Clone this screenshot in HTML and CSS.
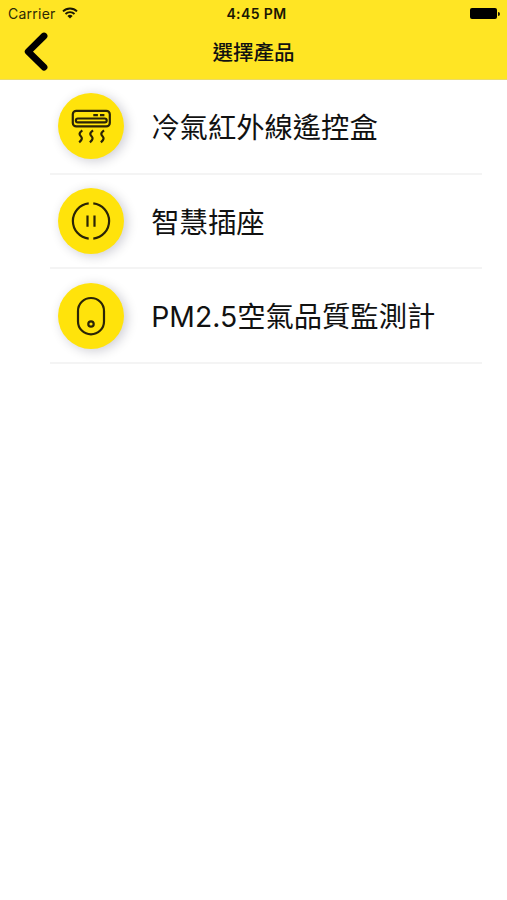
FILE: index.html
```html
<!DOCTYPE html>
<html lang="zh-Hant">

<head>
    <meta charset="UTF-8">
    <meta name="viewport" content="width=device-width, initial-scale=1.0">
    <title>選擇產品</title>
    <link rel="stylesheet" href="styles.css">
</head>

<body>
    <header class="header">
        <div class="status-bar">
            <div class="carrier">
                <span>Carrier</span>
                <svg class="wifi" viewBox="0 0 16 12">
                    <path d="M1 4.400a10 10 0 0 1 14 0M3.500 7a6.400 6.400 0 0 1 9 0" />
                    <path class="solid" d="M5.400 9a3.800 3.800 0 0 1 5.200 0L8 11.600z" />
                </svg>
            </div>
            <div class="time">4:45 PM</div>
            <div class="battery">
                <span class="battery-body"></span>
                <span class="battery-tip"></span>
            </div>
        </div>
        <nav class="nav-bar">
            <a class="back" href="#" aria-label="返回">
                <svg viewBox="0 0 24 40">
                    <path d="M20 4L4.200 19.600L20 35.200" />
                </svg>
            </a>
            <h1 class="title">選擇產品</h1>
        </nav>
    </header>

    <ul class="product-list">
        <li class="product">
            <div class="icon">
                <svg viewBox="0 0 66 66">
                    <rect x="14.800" y="17.800" width="37" height="15.600" rx="3.500" />
                    <rect x="17.900" y="25.500" width="30.800" height="3.900" rx="1.950" />
                    <path d="M35.300 22.200h4.600M42 22.200h4.400" />
                    <path d="M24.300 37.400c-3.800 3-3 4.300-1.500 5.800s1.800 3.200-1.600 6.200M35 37.400c-3.800 3-3 4.300-1.500 5.800s1.800 3.200-1.600 6.200M46 37.400c-3.800 3-3 4.300-1.500 5.800s1.800 3.200-1.600 6.200" />
                </svg>
            </div>
            <span class="name">冷氣紅外線遙控盒</span>
        </li>
        <li class="product">
            <div class="icon">
                <svg viewBox="0 0 66 66">
                    <path d="M30.700 15.400a17.700 17.700 0 0 0 0 35.200M35.300 15.400a17.700 17.700 0 0 1 0 35.200" />
                    <path d="M29.500 27.400v11.400M36.500 27.400v11.400" />
                </svg>
            </div>
            <span class="name">智慧插座</span>
        </li>
        <li class="product">
            <div class="icon">
                <svg viewBox="0 0 66 66">
                    <rect x="20" y="15" width="26" height="36.400" rx="13" />
                    <circle cx="33" cy="41" r="2.700" />
                </svg>
            </div>
            <span class="name">PM2.5空氣品質監測計</span>
        </li>
    </ul>
</body>

</html>
```

FILE: styles.css
```css
* {
    margin: 0;
    padding: 0;
    box-sizing: border-box;
}

body {
    background: #fff;
    color: #111;
    font-family: Inter, "Noto Sans CJK TC", sans-serif;
}

.header {
    height: 80px;
    background: #ffe524;
    border-bottom: 1px solid #ebdb68;
}

.status-bar {
    height: 27px;
    padding: 0 7px 0 8px;
    display: grid;
    grid-template-columns: 1fr auto 1fr;
    align-items: center;
    font-size: 14px;
}

.carrier {
    display: flex;
    align-items: center;
    gap: 6px;
    color: #2d2905;
    letter-spacing: 0.25px;
}

.wifi {
    width: 16px;
    height: 12px;
    margin-top: -2px;
    fill: none;
    stroke: #1a1703;
    stroke-width: 1.9;
}

.wifi .solid {
    fill: #1a1703;
    stroke: none;
}

.time {
    padding-left: 5px;
    font-weight: 600;
    color: #1a1703;
    letter-spacing: 0.4px;
}

.battery {
    display: flex;
    align-items: center;
    justify-content: flex-end;
    gap: 1px;
}

.battery-body {
    width: 27px;
    height: 11px;
    background: #000;
    border-radius: 2px;
}

.battery-tip {
    width: 2px;
    height: 4px;
    background: #1a1703;
    border-radius: 0 2px 2px 0;
}

.nav-bar {
    height: 52px;
    padding: 0 24px;
    display: grid;
    grid-template-columns: 1fr auto 1fr;
    align-items: center;
}

.back {
    height: 42px;
}

.back svg {
    width: 24px;
    height: 40px;
    fill: none;
    stroke: #000;
    stroke-width: 6.8;
    stroke-linecap: round;
    stroke-linejoin: round;
}

.title {
    font-size: 20.5px;
    line-height: 30px;
    font-weight: 500;
}

.product-list {
    margin: 0 25px 0 50px;
    list-style: none;
}

.product {
    height: 94.7px;
    padding-left: 8px;
    display: flex;
    align-items: center;
    gap: 27.3px;
    border-bottom: 2px solid #f4f4f4;
}

.icon {
    width: 66px;
    height: 66px;
    border-radius: 50%;
    background: #ffe30b;
    box-shadow: 3px 2px 12px rgba(0, 0, 40, 0.2);
}

.icon svg {
    display: block;
    width: 66px;
    height: 66px;
    fill: none;
    stroke: #2a2406;
    stroke-width: 2.2;
}

.name {
    padding-top: 3px;
    font-size: 28.3px;
    line-height: 40px;
    white-space: nowrap;
}
```
